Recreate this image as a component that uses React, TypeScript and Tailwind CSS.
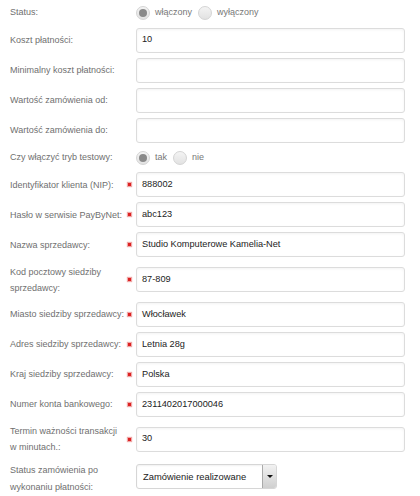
import React from "react";

type Row =
  | { kind: "radio"; label: string[]; options: string[]; checked: number }
  | { kind: "input"; label: string[]; value: string; required?: boolean }
  | { kind: "select"; label: string[]; value: string };

const rows: Row[] = [
  { kind: "radio", label: ["Status:"], options: ["włączony", "wyłączony"], checked: 0 },
  { kind: "input", label: ["Koszt płatności:"], value: "10" },
  { kind: "input", label: ["Minimalny koszt płatności:"], value: "" },
  { kind: "input", label: ["Wartość zamówienia od:"], value: "" },
  { kind: "input", label: ["Wartość zamówienia do:"], value: "" },
  { kind: "radio", label: ["Czy włączyć tryb testowy:"], options: ["tak", "nie"], checked: 0 },
  { kind: "input", label: ["Identyfikator klienta (NIP):"], value: "888002", required: true },
  { kind: "input", label: ["Hasło w serwisie PayByNet:"], value: "abc123", required: true },
  { kind: "input", label: ["Nazwa sprzedawcy:"], value: "Studio Komputerowe Kamelia-Net", required: true },
  { kind: "input", label: ["Kod pocztowy siedziby", "sprzedawcy:"], value: "87-809", required: true },
  { kind: "input", label: ["Miasto siedziby sprzedawcy:"], value: "Włocławek", required: true },
  { kind: "input", label: ["Adres siedziby sprzedawcy:"], value: "Letnia 28g", required: true },
  { kind: "input", label: ["Kraj siedziby sprzedawcy:"], value: "Polska", required: true },
  { kind: "input", label: ["Numer konta bankowego:"], value: "2311402017000046", required: true },
  { kind: "input", label: ["Termin ważności transakcji", "w minutach.:"], value: "30", required: true },
  { kind: "select", label: ["Status zamówienia po", "wykonaniu płatności:"], value: "Zamówienie realizowane" },
];

function Label({ lines, leading }: { lines: string[]; leading: string }) {
  return (
    <div className={`w-[116px] shrink-0 text-[9px] text-[#6f6f6f] whitespace-nowrap ${leading}`}>
      {lines.map((l, i) => (
        <div key={i}>{l}</div>
      ))}
    </div>
  );
}

function Radio({ checked }: { checked: boolean }) {
  return (
    <span className="w-[14px] h-[14px] rounded-full border border-[#d4d4d4] bg-gradient-to-b from-[#f4f4f4] to-[#e2e2e2] flex items-center justify-center shrink-0">
      {checked && <span className="w-[8px] h-[8px] rounded-full bg-[#8a8a8a]" />}
    </span>
  );
}

function Marker({ required }: { required?: boolean }) {
  return (
    <div className="w-[10px] shrink-0 flex items-center justify-start pl-[2px]">
      {required && <span className="w-[3px] h-[3px] bg-[#d22] shadow-[0_0_1px_1px_rgba(220,60,60,0.45)]" />}
    </div>
  );
}

export default function App() {
  return (
    <div
      className="w-[420px] h-[496px] bg-white pt-[3px] pl-[10px] flex flex-col gap-[5px] overflow-hidden"
      style={{ fontFamily: '"Liberation Sans", Arial, sans-serif' }}
    >
      {rows.map((r, i) => {
        const tall = r.label.length > 1;
        if (r.kind === "radio") {
          return (
            <div key={i} className="flex items-center h-[20px]">
              <Label lines={r.label} leading="leading-[15px]" />
              <div className="w-[10px]" />
              <div className="flex items-center">
                {r.options.map((o, j) => (
                  <div key={j} className="flex items-center gap-[5px] mr-[6px]">
                    <Radio checked={j === r.checked} />
                    <span className="text-[9px] text-[#777]">{o}</span>
                  </div>
                ))}
              </div>
            </div>
          );
        }
        if (r.kind === "select") {
          return (
            <div key={i} className="flex items-center h-[35px]">
              <Label lines={r.label} leading="leading-[17px]" />
              <Marker />
              <div className="w-[141px] h-[25px] flex border border-[#d6d6d6] rounded-[3px] bg-white shadow-[inset_0_1px_2px_rgba(0,0,0,0.06)] overflow-hidden -mt-[4px]">
                <div className="flex-1 flex items-center pl-[6px] text-[9.4px] text-[#222]">{r.value}</div>
                <div className="w-[14px] h-full border-l border-[#aaa] bg-gradient-to-b from-[#f2f2f2] to-[#cfcfcf] flex items-center justify-center">
                  <span className="w-0 h-0 border-l-[3px] border-r-[3px] border-t-[3px] border-l-transparent border-r-transparent border-t-[#111]" />
                </div>
              </div>
            </div>
          );
        }
        return (
          <div key={i} className={`flex items-center ${tall ? "h-[35px]" : "h-[25px]"}`}>
            <Label lines={r.label} leading="leading-[16px]" />
            <Marker required={r.required} />
            <div className="w-[269px] h-[25px] border border-[#dcdcdc] rounded-[3px] bg-white shadow-[inset_0_1px_3px_rgba(0,0,0,0.05)] flex items-center pl-[5px] text-[9.2px] text-[#222]">
              {r.value}
            </div>
          </div>
        );
      })}
    </div>
  );
}
